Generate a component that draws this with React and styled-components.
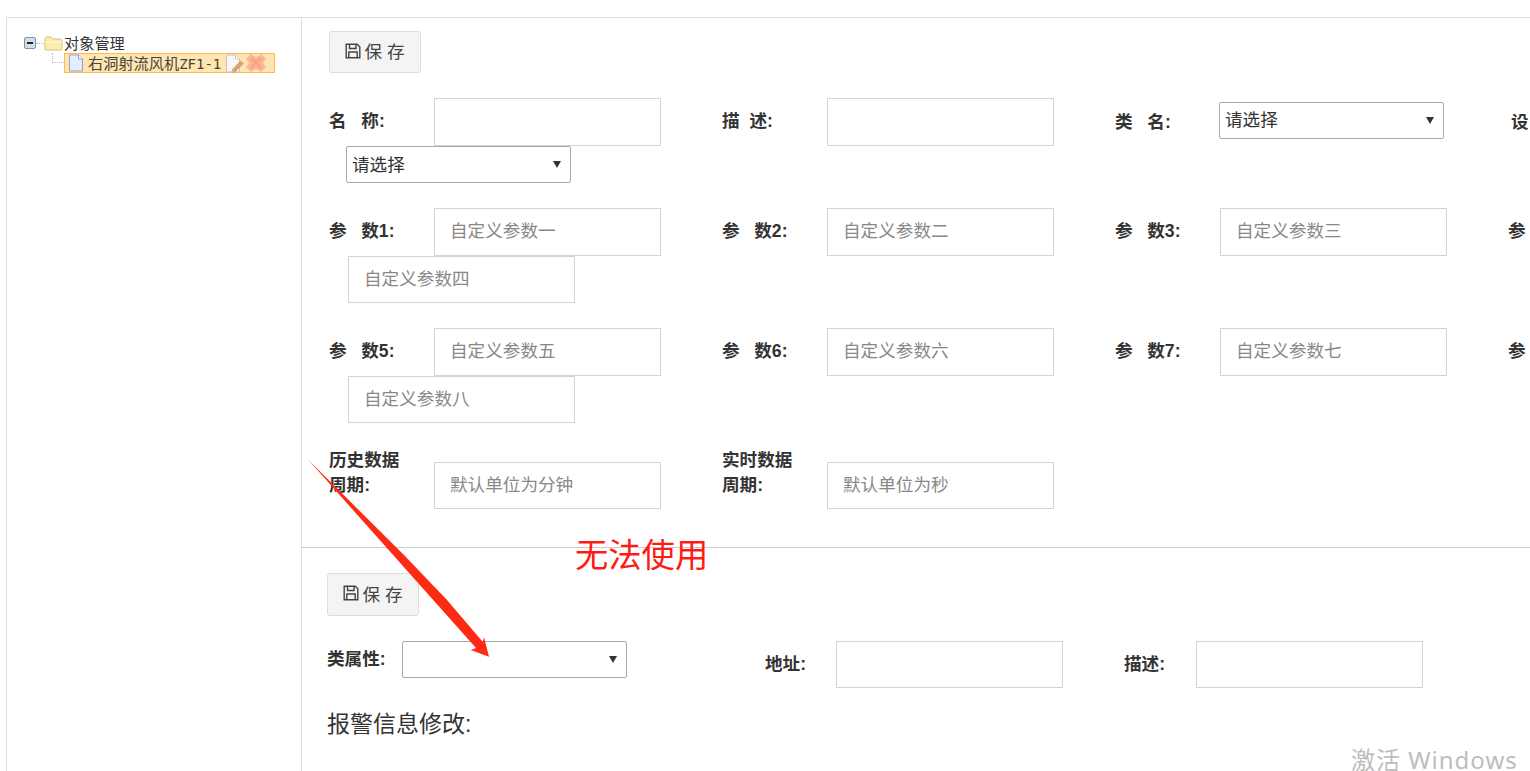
import React from 'react';
import styled, { createGlobalStyle } from 'styled-components';

const GlobalStyle = createGlobalStyle`
  html, body {
    margin: 0;
    height: 100%;
    overflow: hidden;
    background: #fff;
    font-family: "Liberation Sans", "Noto Sans CJK SC", sans-serif;
    color: #333;
  }
`;

const Page = styled.div`
  position: relative;
  width: 1530px;
  height: 771px;
  padding: 17px 0 0 6px;
  box-sizing: border-box;
  overflow: hidden;
`;

const Frame = styled.div`
  display: flex;
  height: 754px;
  border-top: 1px solid #ddd;
  border-left: 1px solid #ddd;
`;

const Sidebar = styled.aside`
  flex: none;
  width: 295px;
  padding-top: 15px;
  box-sizing: border-box;
  border-right: 1px solid #ddd;
`;

const Tree = styled.div`
  display: flex;
  flex-direction: column;
  font-size: 15.2px;
  line-height: 20px;
  color: #333;
`;

const TreeRoot = styled.div`
  display: flex;
  align-items: center;
  height: 20px;
  padding-left: 17px;
  svg {
    flex: none;
  }
`;

const RootName = styled.span`
  margin-top: 2px;
`;

const Dots = styled.span`
  width: 8px;
  border-top: 1px dotted #bbb;
`;

const ChildRow = styled.div`
  display: flex;
  align-items: flex-start;
  height: 20px;
  padding-left: 45px;
`;

const Elbow = styled.span`
  flex: none;
  width: 12px;
  height: 10px;
  border-left: 1px dotted #bbb;
  border-bottom: 1px dotted #bbb;
  box-sizing: border-box;
`;

const SelectedNode = styled.div`
  display: flex;
  align-items: center;
  width: 211px;
  height: 20px;
  padding-left: 3px;
  box-sizing: border-box;
  background: #ffe6b0;
  border: 1px solid #ffb951;
  svg {
    flex: none;
  }
`;

const NodeName = styled.span`
  margin: 2px 4px 0 4px;
  white-space: nowrap;
  color: #444;
`;

const NodeCode = styled.span`
  font-family: "DejaVu Sans Mono", monospace;
  font-size: 14px;
`;

const RemoveSlot = styled.span`
  display: flex;
  margin-left: 2px;
`;

const Main = styled.main`
  flex: 1;
  min-width: 0;
  overflow: hidden;
`;

const Section = styled.section`
  padding: ${p => p.$pad};
`;

const Divider = styled.hr`
  margin: 0;
  border: 0;
  border-top: 1px solid #ccc;
`;

const SaveButton = styled.button`
  display: flex;
  align-items: center;
  justify-content: center;
  gap: 3px;
  width: 92px;
  height: ${p => p.$h}px;
  padding: 0 0 3px;
  margin-bottom: 25px;
  font: 17.6px "Liberation Sans", "Noto Sans CJK SC", sans-serif;
  color: #444;
  background: #f4f4f4;
  border: 1px solid #ddd;
  border-radius: 3px;
`;

const Row = styled.div`
  display: flex;
  align-items: ${p => p.$align || 'center'};
  gap: 61px;
  flex-wrap: nowrap;
`;

const Group = styled.div`
  margin-bottom: ${p => p.$after}px;
`;

const Wrapped = styled.div`
  display: flex;
  margin-left: ${p => p.$indent}px;
`;

const Field = styled.div`
  flex: none;
  display: flex;
  align-items: center;
  margin-right: ${p => p.$trail || 0}px;
`;

const Label = styled.label`
  flex: none;
  align-self: ${p => (p.$top ? 'flex-start' : 'auto')};
  width: ${p => p.$w || 105}px;
  margin-bottom: ${p => (p.$raised ? 2 : 0)}px;
  font-size: 17.6px;
  font-weight: bold;
  line-height: 25px;
  white-space: nowrap;
  color: #333;
`;

const TextInput = styled.input`
  flex: none;
  width: 227px;
  height: ${p => p.$h || 48}px;
  margin-top: ${p => p.$mt || 0}px;
  padding: 0 15px ${p => (p.$h ? 0 : 2)}px;
  box-sizing: border-box;
  font: 17.6px "Liberation Sans", "Noto Sans CJK SC", sans-serif;
  color: #333;
  background: #fff;
  border: 1px solid #d0d4e0;
  border-radius: 0;
  outline: none;
  &::placeholder {
    color: #888;
    opacity: 1;
  }
`;

const SelectWrap = styled.div`
  position: relative;
  flex: none;
  width: 225px;
  height: 37px;
  margin-bottom: ${p => p.$lift || 0}px;
  &::after {
    content: "";
    position: absolute;
    right: 10px;
    top: 15px;
    border-left: 4px solid transparent;
    border-right: 4px solid transparent;
    border-top: 7px solid #333;
  }
`;

const Select = styled.select`
  display: block;
  width: 100%;
  height: 100%;
  padding: 0 5px;
  box-sizing: border-box;
  appearance: none;
  font: 17.6px "Liberation Sans", "Noto Sans CJK SC", sans-serif;
  color: #333;
  background-color: #fff;
  border: 1px solid #a9a9a9;
  border-radius: 2px;
`;

const Heading = styled.h3`
  margin: 21px 0 0;
  font-size: 23px;
  font-weight: normal;
  line-height: 30px;
  color: #333;
`;

const Arrow = styled.svg`
  position: absolute;
  left: 0;
  top: 0;
  pointer-events: none;
`;

const Note = styled.div`
  position: absolute;
  left: 575px;
  top: 533px;
  font-size: 33.3px;
  line-height: 46px;
  color: #ff1a12;
  white-space: nowrap;
`;

const Watermark = styled.div`
  position: absolute;
  left: 1351px;
  top: 742px;
  font-family: "Noto Sans", "Noto Sans CJK SC", sans-serif;
  font-size: 24px;
  letter-spacing: 1px;
  line-height: 36px;
  color: #bdbdbd;
  white-space: nowrap;
`;

const SaveIcon = () => (
  <svg width="16" height="16" viewBox="0 0 16 16" fill="none" stroke="#444" strokeWidth="1.4">
    <path d="M1.2 1.2h11l2.6 2.6v11H1.2z" />
    <path d="M4.5 1.5v4h6.5v-4M3.8 14.6v-5.6h8.4v5.6" />
  </svg>
);

const Expander = () => (
  <svg width="12" height="12" viewBox="0 0 12 12">
    <rect x="0.5" y="0.5" width="11" height="11" rx="1.5" fill="#d5dde6" stroke="#7d94ad" />
    <rect x="3" y="5" width="6" height="2" fill="#222" />
  </svg>
);

const FolderIcon = () => (
  <svg width="20" height="16" viewBox="0 0 20 16">
    <path d="M1 14V3.5Q1 2 2.5 2h4.5l1.5 2h8Q18 4 18 5.5V14Q18 15 17 15H2Q1 15 1 14z" fill="#fbeeb0" stroke="#d9c374" />
    <path d="M1.5 7h17v1H1.5z" fill="#fff8d8" />
  </svg>
);

const DocIcon = () => (
  <svg width="16" height="18" viewBox="0 0 16 18">
    <path d="M1.5 1h9l4 4v12h-13z" fill="#e4edfb" stroke="#8ea4cf" />
    <path d="M10.5 1v4h4" fill="#fff" stroke="#8ea4cf" />
  </svg>
);

const EditIcon = () => (
  <svg width="19" height="19" viewBox="0 0 19 19">
    <path d="M1.5 1h9l4 4v13h-13z" fill="#f8f8f8" stroke="#c4c4c4" />
    <path d="M10.5 1v4h4" fill="#fff" stroke="#c4c4c4" />
    <path d="M15.5 7l3 2.5-8 8-3.5 1 .8-3.6z" fill="#e2a070" stroke="#c98f60" strokeWidth="0.6" />
    <path d="M6.6 18.7l1-3.6 2.6 2.6z" fill="#d8c24a" />
  </svg>
);

const RemoveIcon = () => (
  <svg width="20" height="18" viewBox="0 0 20 18">
    <path
      d="M5 1.5L10 4.5L15 1.5L18.5 5L15.5 9L18.5 13L15 16.5L10 13.5L5 16.5L1.5 13L4.5 9L1.5 5Z"
      fill="#fbab8b"
      stroke="#fbb79c"
      strokeLinejoin="round"
      strokeWidth="2.5"
    />
    <path d="M5 4L15 14M15 4L5 14" stroke="#f79770" strokeWidth="1" />
  </svg>
);

const sp3 = '\u00a0\u00a0\u00a0';

const customRows = [
  [
    [`参${sp3}数1:`, '自定义参数一'],
    [`参${sp3}数2:`, '自定义参数二'],
    [`参${sp3}数3:`, '自定义参数三'],
    [`参${sp3}数4:`, '自定义参数四'],
  ],
  [
    [`参${sp3}数5:`, '自定义参数五'],
    [`参${sp3}数6:`, '自定义参数六'],
    [`参${sp3}数7:`, '自定义参数七'],
    [`参${sp3}数8:`, '自定义参数八'],
  ],
];

const ClassSelect = ({ children, lift }) => (
  <SelectWrap $lift={lift}>
    <Select defaultValue="">
      <option value="">{children}</option>
    </Select>
  </SelectWrap>
);

const App = () => {
  return (
    <Page>
      <GlobalStyle />
      <Frame>
        <Sidebar>
          <Tree>
            <TreeRoot>
              <Expander />
              <Dots />
              <FolderIcon />
              <RootName>对象管理</RootName>
            </TreeRoot>
            <ChildRow>
              <Elbow />
              <SelectedNode>
                <DocIcon />
                <NodeName>右洞射流风机<NodeCode>ZF1-1</NodeCode></NodeName>
                <EditIcon />
                <RemoveSlot><RemoveIcon /></RemoveSlot>
              </SelectedNode>
            </ChildRow>
          </Tree>
        </Sidebar>

        <Main>
          <Section $pad="13px 0 38px 27px">
            <SaveButton $h={42}><SaveIcon />保 存</SaveButton>

            <Group $after={25}>
              <Row>
                <Field><Label $raised>名{sp3}称:</Label><TextInput /></Field>
                <Field><Label $raised>描{'\u00a0\u00a0'}述:</Label><TextInput /></Field>
                <Field $trail={6}><Label $w={104}>类{sp3}名:</Label><ClassSelect lift={4}>请选择</ClassSelect></Field>
                <Field><Label>设{sp3}备:</Label></Field>
              </Row>
              <Wrapped $indent={17}><ClassSelect>请选择</ClassSelect></Wrapped>
            </Group>

            {customRows.map((row, i) => (
              <Group key={i} $after={25}>
                <Row>
                  {row.map(([label, hint], j) => (
                    j < 3
                      ? <Field key={label}><Label $raised>{label}</Label><TextInput placeholder={hint} /></Field>
                      : <Field key={label}><Label $raised>{label}</Label></Field>
                  ))}
                </Row>
                <Wrapped $indent={19}><TextInput $h={47} placeholder={row[3][1]} /></Wrapped>
              </Group>
            ))}

            <Row>
              <Field><Label $top>历史数据<br />周期:</Label><TextInput $h={47} $mt={14} placeholder="默认单位为分钟" /></Field>
              <Field><Label $top>实时数据<br />周期:</Label><TextInput $h={47} $mt={14} placeholder="默认单位为秒" /></Field>
            </Row>
          </Section>

          <Divider />

          <Section $pad="25px 0 0 25px">
            <SaveButton $h={43}><SaveIcon />保 存</SaveButton>
            <Row $align="flex-start">
              <Field $trail={77}><Label $w={75}>类属性:</Label><ClassSelect /></Field>
              <Field><Label $w={71}>地址:</Label><TextInput $h={47} /></Field>
              <Field><Label $w={72}>描述:</Label><TextInput $h={47} /></Field>
            </Row>
            <Heading>报警信息修改:</Heading>
          </Section>
        </Main>
      </Frame>

      <Arrow width="1530" height="771" viewBox="0 0 1530 771">
        <polygon points="308,459.5 404,555 447,600 482.7,641.7 484,637.3 489,656.7 470.7,650 476,648" fill="#ff2a14" />
      </Arrow>
      <Note>无法使用</Note>
      <Watermark>激活 Windows</Watermark>
    </Page>
  );
};

export default App;
